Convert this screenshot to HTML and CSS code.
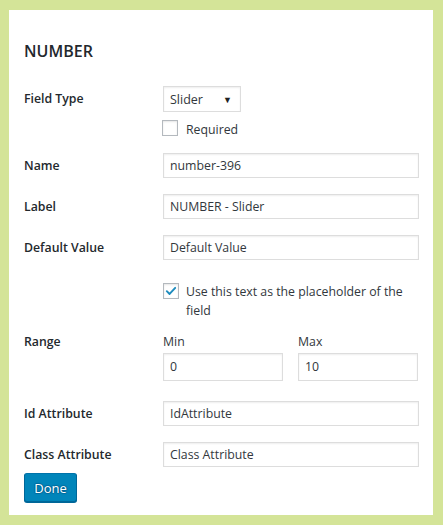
FILE: index.html
```html
<!DOCTYPE html>
<html>
<head>
<meta charset="utf-8">
<link rel="stylesheet" href="styles.css">
</head>
<body>
<div class="panel">
  <h2 class="title">NUMBER</h2>

  <div class="row row-type">
    <div class="label">Field Type</div>
    <div class="control">
      <div class="select"><span>Slider</span><span class="arrow">▼</span></div>
      <label class="check check-required"><span class="box"></span><span class="req-text">Required</span></label>
    </div>
  </div>

  <div class="row row-name">
    <div class="label">Name</div>
    <div class="control"><div class="input">number-396</div></div>
  </div>

  <div class="row row-labelf">
    <div class="label">Label</div>
    <div class="control"><div class="input">NUMBER - Slider</div></div>
  </div>

  <div class="row row-default">
    <div class="label">Default Value</div>
    <div class="control"><div class="input">Default Value</div></div>
  </div>

  <div class="row row-placeholder">
    <div class="label"></div>
    <div class="control">
      <label class="check check-ph"><span class="box checked"><svg viewBox="0 0 16 16" width="16" height="16"><path d="M3.2 8.2 L6.4 11.4 L12.8 4.4" fill="none" stroke="#1e8cbe" stroke-width="2.2" stroke-linecap="round" stroke-linejoin="round"/></svg></span><span class="ph-text">Use this text as the placeholder of the field</span></label>
    </div>
  </div>

  <div class="row row-range">
    <div class="label">Range</div>
    <div class="control range">
      <div class="range-col">
        <div class="sublabel">Min</div>
        <div class="input tall">0</div>
      </div>
      <div class="range-col">
        <div class="sublabel">Max</div>
        <div class="input tall">10</div>
      </div>
    </div>
  </div>

  <div class="row row-id">
    <div class="label">Id Attribute</div>
    <div class="control"><div class="input">IdAttribute</div></div>
  </div>

  <div class="row row-class">
    <div class="label">Class Attribute</div>
    <div class="control"><div class="input">Class Attribute</div></div>
  </div>

  <button class="done">Done</button>
</div>
</body>
</html>
```

FILE: styles.css
```css
html, body {
  margin: 0;
  padding: 0;
}
body {
  background: #d4e498;
  font-family: "Open Sans", "Noto Sans", "Liberation Sans", sans-serif;
  font-size: 12.3px;
  color: #23282d;
  width: 443px;
  height: 525px;
  overflow: hidden;
}
.panel {
  margin: 10px 10px 0 9px;
  height: 505px;
  box-sizing: border-box;
  background: #fff;
  padding: 30px 14px 0 15px;
}
.title {
  margin: 0;
  font-size: 16px;
  line-height: 22px;
  font-weight: 600;
  color: #23282d;
}
.row {
  display: grid;
  grid-template-columns: 139px 256px;
  align-items: start;
}
.label {
  font-weight: 600;
  font-size: 12.3px;
  color: #23282d;
}
.row-type { margin-top: 24px; }
.row-type .label { line-height: 26px; }
.select {
  width: 78px;
  height: 26px;
  box-sizing: border-box;
  border: 1px solid #ddd;
  box-shadow: inset 0 1px 2px rgba(0,0,0,.07);
  display: flex;
  align-items: center;
  justify-content: space-between;
  padding: 0 8px 0 6px;
  color: #32373c;
  font-size: 12.5px;
}
.arrow {
  font-size: 9px;
  color: #222;
}
.check {
  display: flex;
  align-items: flex-start;
  gap: 7px;
  color: #32373c;
}
.box {
  flex: 0 0 auto;
  width: 16px;
  height: 16px;
  box-sizing: border-box;
  border: 1px solid #b4b9be;
  box-shadow: inset 0 1px 2px rgba(0,0,0,.1);
  display: flex;
  align-items: center;
  justify-content: center;
  background: #fff;
}
.box svg { display: block; }
.check-required {
  margin-top: 8px;
  margin-left: -1px;
  line-height: 16px;
  gap: 8px;
}
.req-text { padding-top: 2px; }
.input {
  height: 25px;
  box-sizing: border-box;
  border: 1px solid #ddd;
  box-shadow: inset 0 1px 2px rgba(0,0,0,.07);
  padding: 0 6px;
  line-height: 23px;
  color: #32373c;
}
.row-name, .row-labelf, .row-default, .row-id, .row-class { align-items: center; }
.row-name { margin-top: 15px; }
.row-labelf { margin-top: 16px; }
.row-default { margin-top: 16px; }
.row-placeholder { margin-top: 22px; }
.check-ph {
  line-height: 19px;
}
.check-ph .box { margin-top: 1px; }
.row-range { margin-top: 12px; }
.row-range .label { line-height: 19px; }
.range {
  display: grid;
  grid-template-columns: 120px 120px;
  column-gap: 15px;
}
.sublabel {
  line-height: 19px;
  margin-bottom: 2px;
  color: #32373c;
}
.input.tall {
  height: 28px;
  line-height: 26px;
}
.row-id { margin-top: 20px; }
.row-class { margin-top: 16px; }
.done {
  display: block;
  margin-top: 6px;
  height: 29px;
  width: 53px;
  padding: 0;
  font-family: inherit;
  font-size: 13px;
  color: #fff;
  background: #0085ba;
  border: 1px solid #0073aa;
  border-color: #0073aa #006799 #006799;
  border-radius: 3px;
  box-shadow: 0 1px 0 #006799;
  text-shadow: 0 -1px 1px #006799, 1px 0 1px #006799, 0 1px 1px #006799, -1px 0 1px #006799;
}
```
